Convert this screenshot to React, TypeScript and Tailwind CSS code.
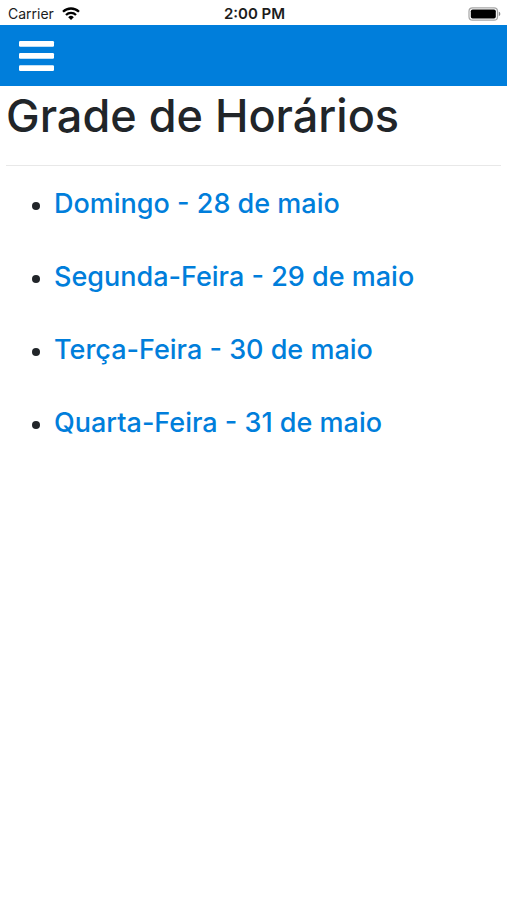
interface Dia {
  nome: string;
  data: string;
}

const dias: Dia[] = [
  { nome: "Domingo", data: "28 de maio" },
  { nome: "Segunda-Feira", data: "29 de maio" },
  { nome: "Terça-Feira", data: "30 de maio" },
  { nome: "Quarta-Feira", data: "31 de maio" },
];

// ─── Barra de status ──────────────────────────────────────────────────────────

function BarraStatus() {
  return (
    <div className="grid grid-cols-3 items-center h-[25px] pt-0.5 pl-2 pr-1.5 text-sm text-[#1c1c1c]">
      <div className="flex items-center gap-2">
        <span>Carrier</span>
        <svg viewBox="0 0 18 13" className="w-[18px] h-[13px]" fill="none" stroke="#000" strokeWidth="2.3" aria-hidden>
          <path d="M1 4.8a11.4 11.4 0 0 1 16 0" />
          <path d="M4 8a7.1 7.1 0 0 1 10 0" />
          <path d="M9 13 6.2 10.2a4 4 0 0 1 5.6 0Z" fill="#000" stroke="none" />
        </svg>
      </div>
      <span className="text-center text-[15px] leading-5 font-semibold">2:00 PM</span>
      <svg viewBox="0 0 33 14" className="w-[33px] h-3.5 justify-self-end" aria-hidden>
        <rect x="1" y="0.8" width="28.5" height="12.4" rx="3.5" fill="none" stroke="#a6a6a6" strokeWidth="1.2" />
        <rect x="2.8" y="2.5" width="25" height="9" rx="1.8" fill="#000" />
        <path d="M30.8 4.8c2 .5 2 3.9 0 4.4Z" fill="#8a8a8a" />
      </svg>
    </div>
  );
}

// ─── Página ───────────────────────────────────────────────────────────────────

export default function App() {
  return (
    <div className="min-h-screen bg-white font-['Inter',sans-serif] text-[#212529]">
      <BarraStatus />

      <header className="flex items-center h-[61px] px-[19px] bg-[#007edb]">
        <button type="button" aria-label="Abrir menu" className="text-white">
          <svg viewBox="0 0 36 32" className="w-9 h-8" fill="currentColor" aria-hidden>
            <rect x="0" y="1" width="35" height="5.8" rx="1.2" />
            <rect x="0" y="13" width="35" height="5.8" rx="1.2" />
            <rect x="0" y="25.2" width="35" height="5.8" rx="1.2" />
          </svg>
        </button>
      </header>

      <main className="px-1.5">
        <h1 className="text-[45px] leading-[60px] font-medium">Grade de Horários</h1>
        <hr className="mt-[19px] mb-5 border-[#e8e8e8]" />
        <ul className="list-disc pl-12 space-y-9 text-2xl leading-9">
          {dias.map((dia) => (
            <li key={dia.nome}>
              <a href="#" className="text-[27px] leading-9 font-medium text-[#007edb]">
                {dia.nome} - {dia.data}
              </a>
            </li>
          ))}
        </ul>
      </main>
    </div>
  );
}
